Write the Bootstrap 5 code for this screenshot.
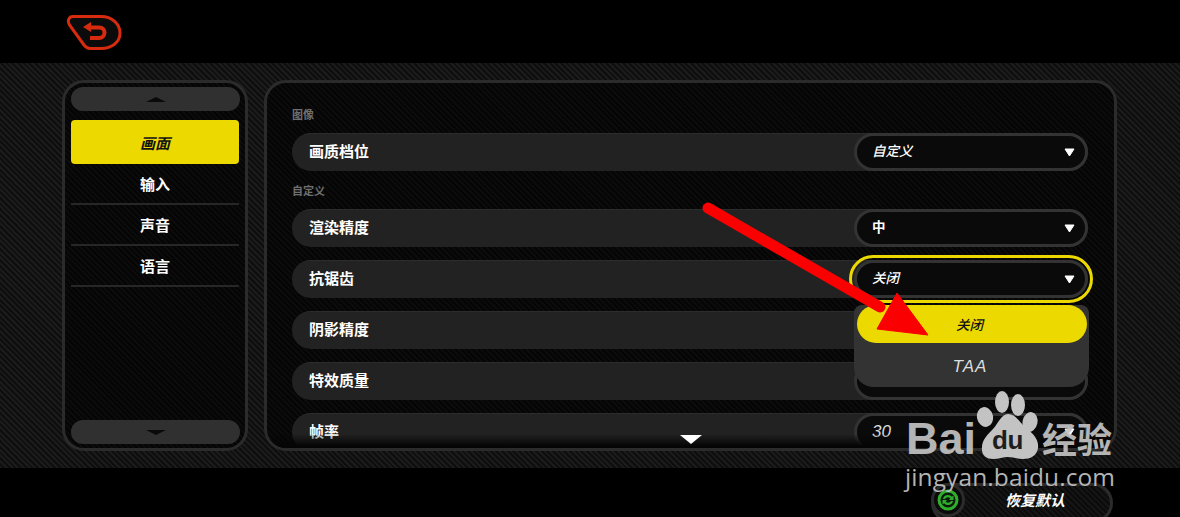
<!DOCTYPE html>
<html lang="zh-CN">
<head>
  <meta charset="UTF-8">
  <title>设置</title>
  <meta name="viewport" content="width=device-width, initial-scale=1">
  <link href="https://cdn.jsdelivr.net/npm/bootstrap@5.3.2/dist/css/bootstrap.min.css" rel="stylesheet">
  <style>
    html, body { height: 517px; overflow: hidden; background: #000; }
    body {
      position: relative;
      font-family: "Liberation Sans", "Noto Sans CJK SC", sans-serif;
      color: #fff;
    }
    .game-txt { font-family: "Noto Sans CJK SC", sans-serif; font-weight: 700; font-size: 15px; line-height: 1; }
    .top-strip { height: 63px; padding: 14px 0 0 66px; }
    .mid-strip {
      height: 405px;
      padding: 17px 63px 17px 62px;
      gap: 16px;
      background: repeating-linear-gradient(45deg, #1b1b1b 0 2px, #0e0e0e 2px 4px);
    }
    .bottom-strip { height: 49px; padding: 15px 67px 0 0; }

    .side-panel, .main-panel {
      border: 3px solid #2b2b2b;
      border-radius: 22px;
      background: repeating-linear-gradient(45deg, #0b0b0b 0 2px, #050505 2px 4px);
    }
    .side-panel { width: 186px; padding: 4px 5px 4px 6px; }
    .main-panel { width: 853px; position: relative; overflow: hidden; padding: 23px 26px 0 25px; }
    .main-panel::after {
      content: "";
      position: absolute;
      left: 0; right: 0; bottom: 0;
      height: 14px;
      background: linear-gradient(to bottom, rgba(5,5,5,0), #050505 85%);
    }

    .scroll-btn { height: 24px; border-radius: 12px; background: #303030; flex: none; }
    .tri-up { width: 0; border: 10px solid transparent; border-top: 0; border-bottom: 5px solid #0a0a0a; }
    .tri-down { width: 0; border: 10px solid transparent; border-bottom: 0; border-top: 5px solid #0a0a0a; }
    .menu-on { height: 44px; margin: 9px 1px 0 0; border-radius: 4px; background: #ecd900; color: #111; font-style: italic; }
    .menu-off { height: 41px; margin-right: 1px; border-bottom: 2px solid #272727; }

    .sect-label { height: 16px; margin-bottom: 11px; font-size: 11px; line-height: 16px; color: #6f6f6f; font-family: "Noto Sans CJK SC", sans-serif; font-weight: 700; }
    .sect-label.next { margin-top: -2px; }
    .set-row {
      height: 38px;
      margin-bottom: 13px;
      padding-left: 17px;
      border-radius: 19px;
      background: #222;
      border-top: 1px solid #2c2c2c;
      flex: none;
    }
    .row-name { margin-top: -4px; }
    .pick-box {
      position: relative;
      width: 234px;
      height: 38px;
      margin-top: -1px;
      padding: 0 10px 0 15px;
      border: 3px solid #333;
      border-radius: 19px;
      background: #0a0a0a;
      font-size: 13.500px;
    }
    .pick-box span { margin-top: -2px; }
    .pick-box.open { outline: 3px solid #ecd900; outline-offset: 2px; }
    .pick-it { font-style: italic; font-weight: 500; }
    .pick-num { font-family: "Liberation Sans", sans-serif; font-weight: 400; font-style: italic; font-size: 17px; color: #ddd; }
    .tri-white { width: 11px; height: 9px; }

    .drop-box.dropdown-menu {
      display: block;
      top: 42px; left: -3px;
      z-index: 5;
      width: 235px;
      min-width: 0;
      height: 82px;
      padding: 0;
      border: 0;
      border-radius: 8px 8px 20px 20px;
      background: #333;
      text-align: center;
    }
    .drop-on, .drop-off { display: flex; align-items: center; justify-content: center; }
    .drop-on { height: 38px; margin: 0 2px 0 3px; padding: 2px 5px 0 0; border-radius: 19px; background: #ecd900; color: #111; font-style: italic; font-weight: 500; font-size: 13.500px; }
    .drop-off { height: 44px; padding: 3px 3px 0 0; color: #ddd; font: italic 400 17px "Liberation Sans", sans-serif; letter-spacing: 1px; }

    .more-tri { position: absolute; left: 680px; top: 435px; width: 22px; height: 9px; z-index: 6; }
    .restore-btn {
      width: 182px;
      height: 40px;
      border: 3px solid #2b2b2b;
      border-radius: 20px;
      background: repeating-linear-gradient(45deg, #151515 0 2px, #0b0b0b 2px 4px);
      font-style: italic;
      gap: 40px;
    }
    .restore-ico { width: 34px; height: 34px; margin: -3px 0 0 -3px; border: 3px solid #2b2b2b; border-radius: 50%; background: #0a0a0a; flex: none; }
    .restore-txt { margin-top: 6px; }

    .paint-arrow { position: absolute; left: 700px; top: 198px; z-index: 10; pointer-events: none; }
    .wm-box { position: absolute; left: 0; top: 0; width: 1180px; height: 517px; z-index: 11; pointer-events: none; color: #c3c3c3; }
    .wm-bai { position: absolute; left: 906px; top: 416px; font: 700 45px/1 "Liberation Sans", sans-serif; opacity: .92; }
    .wm-du { position: absolute; left: 992px; top: 427px; font: 700 26px/1 "Liberation Sans", sans-serif; letter-spacing: -.5px; color: #1e1e1e; }
    .wm-cn { position: absolute; left: 1042px; top: 420px; font: 700 35px/1 "Noto Sans CJK SC", sans-serif; opacity: .92; }
    .wm-url { position: absolute; left: 905px; top: 465px; font: 400 24.500px/1 "Open Sans", sans-serif; letter-spacing: .1px; opacity: .92; }
    .wm-paw { position: absolute; left: 976px; top: 390px; }
  </style>
</head>
<body>
  <div class="top-strip">
    <svg width="56" height="38" viewBox="0 0 56 38" aria-label="返回">
      <path d="M7 2.500H35C46 2.500 54 10 54 19C54 28 46 34.500 35 34.500H24C21 34.500 20 33.500 18 31L3.500 11C1 6.500 3 2.500 7 2.500Z" fill="#0b0b0b" stroke="#d62b0e" stroke-width="3"/>
      <path d="M24 13.500H33C37 13.500 38.500 16 38.500 18.500C38.500 21.500 36.500 24 33 24H24" fill="none" stroke="#d62b0e" stroke-width="4"/>
      <path d="M17 13L25 8V18Z" fill="#d62b0e"/>
    </svg>
  </div>

  <div class="mid-strip d-flex">
    <div class="side-panel d-flex flex-column">
      <div class="scroll-btn d-flex align-items-center justify-content-center"><div class="tri-up"></div></div>
      <div class="menu-on game-txt d-flex align-items-center justify-content-center">画面</div>
      <div class="menu-off game-txt d-flex align-items-center justify-content-center">输入</div>
      <div class="menu-off game-txt d-flex align-items-center justify-content-center">声音</div>
      <div class="menu-off game-txt d-flex align-items-center justify-content-center">语言</div>
      <div class="scroll-btn d-flex align-items-center justify-content-center mt-auto"><div class="tri-down"></div></div>
    </div>

    <div class="main-panel d-flex flex-column">
      <div class="sect-label">图像</div>
      <div class="set-row game-txt d-flex align-items-center justify-content-between">
        <span class="row-name">画质档位</span>
        <div class="pick-box d-flex align-items-center justify-content-between"><span class="pick-it">自定义</span>
          <svg class="tri-white" viewBox="0 0 11 9"><path d="M1 1H10L5.500 8Z" fill="#fff" stroke="#fff" stroke-linejoin="round"/></svg></div>
      </div>
      <div class="sect-label next">自定义</div>
      <div class="set-row game-txt d-flex align-items-center justify-content-between">
        <span class="row-name">渲染精度</span>
        <div class="pick-box d-flex align-items-center justify-content-between"><span>中</span>
          <svg class="tri-white" viewBox="0 0 11 9"><path d="M1 1H10L5.500 8Z" fill="#fff" stroke="#fff" stroke-linejoin="round"/></svg></div>
      </div>
      <div class="set-row game-txt d-flex align-items-center justify-content-between">
        <span class="row-name">抗锯齿</span>
        <div class="pick-box open d-flex align-items-center justify-content-between"><span class="pick-it">关闭</span>
          <svg class="tri-white" viewBox="0 0 11 9"><path d="M1 1H10L5.500 8Z" fill="#fff" stroke="#fff" stroke-linejoin="round"/></svg>
          <div class="drop-box dropdown-menu game-txt">
            <div class="drop-on">关闭</div>
            <div class="drop-off">TAA</div>
          </div>
        </div>
      </div>
      <div class="set-row game-txt d-flex align-items-center justify-content-between">
        <span class="row-name">阴影精度</span>
        <div class="pick-box"></div>
      </div>
      <div class="set-row game-txt d-flex align-items-center justify-content-between">
        <span class="row-name">特效质量</span>
        <div class="pick-box"></div>
      </div>
      <div class="set-row game-txt d-flex align-items-center justify-content-between">
        <span class="row-name">帧率</span>
        <div class="pick-box d-flex align-items-center justify-content-between"><span class="pick-num">30</span>
          <svg class="tri-white" viewBox="0 0 11 9"><path d="M1 1H10L5.500 8Z" fill="#fff" stroke="#fff" stroke-linejoin="round"/></svg></div>
      </div>
    </div>
  </div>

  <div class="bottom-strip d-flex justify-content-end">
    <div class="restore-btn game-txt d-flex align-items-start">
      <div class="restore-ico d-flex align-items-center justify-content-center">
        <svg width="22" height="22" viewBox="0 0 22 22">
          <circle cx="11" cy="11" r="9" fill="#0b1a0b" stroke="#2fae2c" stroke-width="3"/>
          <path d="M6 10C6.300 7.500 8.500 6 11 6C12.600 6 14 6.700 14.800 7.800L16.500 6.500V11H12L13.400 9.400C12.800 8.700 12 8.300 11 8.300C9.500 8.300 8.500 9 8.100 10Z" fill="#2fae2c"/>
          <path d="M16 12C15.700 14.500 13.500 16 11 16C9.400 16 8 15.300 7.200 14.200L5.500 15.500V11H10L8.600 12.600C9.200 13.300 10 13.700 11 13.700C12.500 13.700 13.500 13 13.900 12Z" fill="#2fae2c"/>
        </svg>
      </div>
      <span class="restore-txt">恢复默认</span>
    </div>
  </div>

  <svg class="more-tri" viewBox="0 0 22 9"><path d="M0 0H22L11 9Z" fill="#fff"/></svg>

  <svg class="paint-arrow" width="240" height="150" viewBox="700 198 240 150">
    <path d="M708 208L880 307" stroke="#fb0000" stroke-width="11" stroke-linecap="round"/>
    <path d="M897 293L928 335L877 329Z" fill="#fb0000" stroke="#fb0000" stroke-width="1"/>
  </svg>

  <div class="wm-box">
    <svg class="wm-paw" width="66" height="72" viewBox="0 0 66 72">
      <ellipse cx="9" cy="27" rx="8" ry="10" fill="#c3c3c3" transform="rotate(-12 9 27)"/>
      <ellipse cx="26" cy="12" rx="7" ry="11" fill="#c3c3c3"/>
      <ellipse cx="42" cy="15" rx="7" ry="11" fill="#c3c3c3"/>
      <ellipse cx="54" cy="32" rx="7.500" ry="10" fill="#c3c3c3" transform="rotate(12 54 32)"/>
      <path d="M32 24C40 24 44 33 50 38C58 44 63 50 62 58C61 66 54 69 47 69C41 69 37 67 32 67C27 67 23 69 17 69C10 69 5 65 6 57C6 50 12 44 17 39C22 34 25 24 32 24Z" fill="#c3c3c3"/>
    </svg>
    <span class="wm-bai">Bai</span>
    <span class="wm-du">du</span>
    <span class="wm-cn">经验</span>
    <span class="wm-url">jingyan.baidu.com</span>
  </div>
</body>
</html>
